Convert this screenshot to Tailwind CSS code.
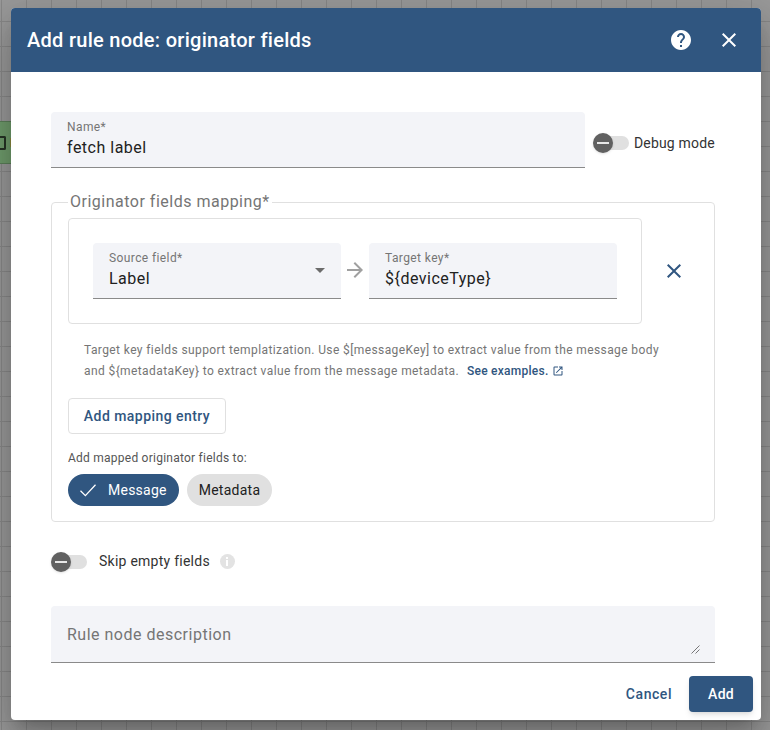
<!DOCTYPE html>
<html lang="en">
<head>
    <meta charset="UTF-8">
    <meta name="viewport" content="width=device-width, initial-scale=1.0">
    <script src="https://cdn.jsdelivr.net/npm/@tailwindcss/browser@4"></script>
    <title>Add rule node</title>
</head>
<body class="relative w-[770px] h-[730px] overflow-hidden pl-[11px] pt-[8px] font-['Roboto',sans-serif] bg-[#9a9a9a] bg-[linear-gradient(#888888_1px,transparent_1px),linear-gradient(90deg,#888888_1px,transparent_1px)] bg-[size:25px_25px] bg-[position:1px_-4px]">
    <!-- rule node behind the dialog -->
    <div class="absolute left-0 top-[121px] w-[11px] h-[43px] bg-[#6f9c6c] border-y border-[#5b7f59] flex items-center">
        <div class="w-[6px] h-[14px] border-2 border-l-0 border-[#263326] rounded-r-[2px]"></div>
        <div class="ml-[4px] w-[1px] h-[9px] bg-[#8a8a40]"></div>
    </div>

    <div class="relative w-[750px] h-[712px] bg-white rounded-[4px] overflow-hidden shadow-[0_11px_15px_-7px_rgba(0,0,0,0.2),0_24px_38px_3px_rgba(0,0,0,0.14),0_9px_46px_8px_rgba(0,0,0,0.12)] flex flex-col">
        <!-- header -->
        <div class="h-[64px] shrink-0 bg-[#305680] flex items-center pl-4 pr-[20px] text-white">
            <h2 class="text-[20px] font-medium tracking-[0.28px] flex-1">Add rule node: originator fields</h2>
            <svg class="w-6 h-6 mr-[24px]" viewBox="0 0 24 24" fill="#fff"><path d="M12 2C6.48 2 2 6.48 2 12s4.48 10 10 10 10-4.48 10-10S17.52 2 12 2zm1 17h-2v-2h2v2zm2.07-7.75l-.9.92C13.45 12.9 13 13.5 13 15h-2v-.5c0-1.1.45-2.1 1.17-2.83l1.24-1.26c.37-.36.59-.86.59-1.41 0-1.1-.9-2-2-2s-2 .9-2 2H8c0-2.21 1.79-4 4-4s4 1.79 4 4c0 .88-.36 1.68-.93 2.25z"/></svg>
            <svg class="w-6 h-6" viewBox="0 0 24 24" fill="#fff"><path d="M19 6.41 17.59 5 12 10.59 6.41 5 5 6.41 10.59 12 5 17.59 6.41 19 12 13.41 17.59 19 19 17.59 13.41 12z"/></svg>
        </div>

        <!-- body -->
        <div class="flex-1 pl-[40px] pr-[30px] pt-[40px]">
            <div class="flex items-center">
                <div class="w-[534px] h-[56px] shrink-0 bg-[#f3f4f8] rounded-t-[4px] border-b border-[#8a8a8a] px-4 pt-[8px]">
                    <div class="text-[12px] leading-[14px] tracking-[0.4px] text-[#757575]">Name*</div>
                    <div class="text-[16px] leading-[24px] mt-[2px] tracking-[0.5px] text-[#212121]">fetch label</div>
                </div>
                <div class="flex items-center ml-[8px] mt-[6px] shrink-0">
                    <div class="relative w-[36px] h-[14px] flex items-center">
                        <div class="absolute left-[4px] w-[32px] h-[14px] rounded-full bg-[#e0e0e0]"></div>
                        <div class="absolute left-0 w-[20px] h-[20px] rounded-full bg-[#616161] shadow flex items-center justify-center"><div class="w-[12px] h-[2px] bg-[#e8e8e8]"></div></div>
                    </div>
                    <span class="ml-[5px] text-[14px] tracking-[0.17px] text-[#333333] whitespace-nowrap">Debug mode</span>
                </div>
            </div>

            <!-- mapping fieldset -->
            <fieldset class="mt-[25px] w-[664px] h-[329px] border border-[#e0e0e0] rounded-[4px] px-4">
                <legend class="px-[2px] text-[16px] leading-[18px] tracking-[0.5px] text-[#757575]">Originator fields mapping*</legend>
                <div class="flex items-center mt-[7px]">
                    <div class="w-[574px] h-[106px] border border-[#e0e0e0] rounded-[4px] px-[24px] pt-[24px] flex items-start">
                        <div class="relative w-[248px] h-[56px] bg-[#f3f4f8] rounded-t-[4px] border-b border-[#8a8a8a] px-4 pt-[8px]">
                            <div class="text-[12px] leading-[14px] tracking-[0.4px] text-[#757575]">Source field*</div>
                            <div class="text-[16px] leading-[24px] mt-[2px] tracking-[0.5px] text-[#212121]">Label</div>
                            <div class="absolute right-[16px] top-[25px] w-0 h-0 border-l-[5px] border-r-[5px] border-t-[5px] border-l-transparent border-r-transparent border-t-[#6b6b6b]"></div>
                        </div>
                        <svg class="w-6 h-6 mx-[2px] mt-[15px] shrink-0" viewBox="0 0 24 24" fill="#a0a0a0"><path d="M12 4l-1.41 1.41L16.17 11H4v2h12.17l-5.58 5.59L12 20l8-8z"/></svg>
                        <div class="w-[248px] h-[56px] bg-[#f3f4f8] rounded-t-[4px] border-b border-[#8a8a8a] px-4 pt-[8px]">
                            <div class="text-[12px] leading-[14px] tracking-[0.4px] text-[#757575]">Target key*</div>
                            <div class="text-[16px] leading-[24px] mt-[2px] tracking-[0.5px] text-[#212121]">${deviceType}</div>
                        </div>
                    </div>
                    <svg class="w-6 h-6 ml-[20px] mb-[1px] shrink-0" viewBox="0 0 24 24" fill="#305680"><path d="M19 6.41 17.59 5 12 10.59 6.41 5 5 6.41 10.59 12 5 17.59 6.41 19 12 13.41 17.59 19 19 17.59 13.41 12z"/></svg>
                </div>
                <div class="pl-[16px] mt-[16px] text-[12px] leading-[20px] tracking-[0.4px] text-[#757575]">
                    <div>Target key fields support templatization. Use $[messageKey] to extract value from the message body</div>
                    <div class="flex items-center pt-[1px] -mb-[1px]">and ${metadataKey} to extract value from the message metadata.
                        <span class="ml-[8px] font-medium tracking-[0.25px] text-[#305680]">See examples.</span>
                        <svg class="w-[12px] h-[12px] ml-[4px]" viewBox="0 0 24 24" fill="#305680"><path d="M19 19H5V5h7V3H5a2 2 0 0 0-2 2v14a2 2 0 0 0 2 2h14c1.1 0 2-.9 2-2v-7h-2v7zM14 3v2h3.59l-9.83 9.83 1.41 1.41L19 6.41V10h2V3h-7z"/></svg>
                    </div>
                </div>
                <button class="block mt-[18px] w-[158px] h-[36px] border border-[#e0e0e0] rounded-[4px] text-[14px] font-medium tracking-[0.45px] text-[#305680]">Add mapping entry</button>
                <div class="mt-[16px] text-[12px] leading-[16px] tracking-[0.24px] text-[#555555]">Add mapped originator fields to:</div>
                <div class="flex gap-[8px] mt-[8px]">
                    <div class="w-[111px] h-[32px] rounded-full bg-[#305680] text-white text-[14px] tracking-[0.25px] flex items-center pl-[11px]">
                        <svg class="w-[18px] h-[18px] mr-[11px]" viewBox="0 0 24 24" fill="none" stroke="#fff" stroke-width="1.7"><path d="M2 13l6.5 6.5L22 5"/></svg>Message
                    </div>
                    <div class="w-[85px] h-[32px] rounded-full bg-[#e0e0e0] text-[#212121] text-[14px] tracking-[0.25px] flex items-center justify-center">Metadata</div>
                </div>
            </fieldset>

            <div class="flex items-center mt-[29px]">
                <div class="relative w-[36px] h-[14px] flex items-center">
                    <div class="absolute left-[4px] w-[32px] h-[14px] rounded-full bg-[#e0e0e0]"></div>
                    <div class="absolute left-0 w-[20px] h-[20px] rounded-full bg-[#616161] shadow flex items-center justify-center"><div class="w-[12px] h-[2px] bg-[#e8e8e8]"></div></div>
                </div>
                <span class="ml-[12px] text-[14px] tracking-[0.25px] text-[#333333]">Skip empty fields</span>
                <div class="ml-[10px] -mt-[1px] w-[15px] h-[15px] rounded-full bg-[#e3e3e3] flex flex-col items-center justify-center gap-[1px]">
                    <div class="w-[2px] h-[2px] bg-white"></div>
                    <div class="w-[2px] h-[6px] bg-white"></div>
                </div>
            </div>

            <div class="relative mt-[34px] w-[664px] h-[57px] bg-[#f3f4f8] rounded-t-[4px] border-b border-[#8a8a8a] px-4 pt-[17px] text-[16px] leading-[24px] tracking-[0.5px] text-[#757575]">
                Rule node description
                <svg class="absolute right-[15px] bottom-[8px] w-[9px] h-[9px]" viewBox="0 0 9 9" stroke="#555" stroke-width="0.8"><path d="M0.5 8.5 8.5 0.5M4.5 8.5 8.5 4.5"/></svg>
            </div>
        </div>

        <!-- actions -->
        <div class="absolute right-[8px] bottom-[8px] flex items-center">
            <button class="mr-[17px] text-[14px] font-medium tracking-[0.55px] text-[#305680]">Cancel</button>
            <button class="w-[64px] h-[36px] rounded-[4px] bg-[#305680] text-white text-[14px] font-medium tracking-[0.25px] shadow-md">Add</button>
        </div>
    </div>
</body>
</html>
